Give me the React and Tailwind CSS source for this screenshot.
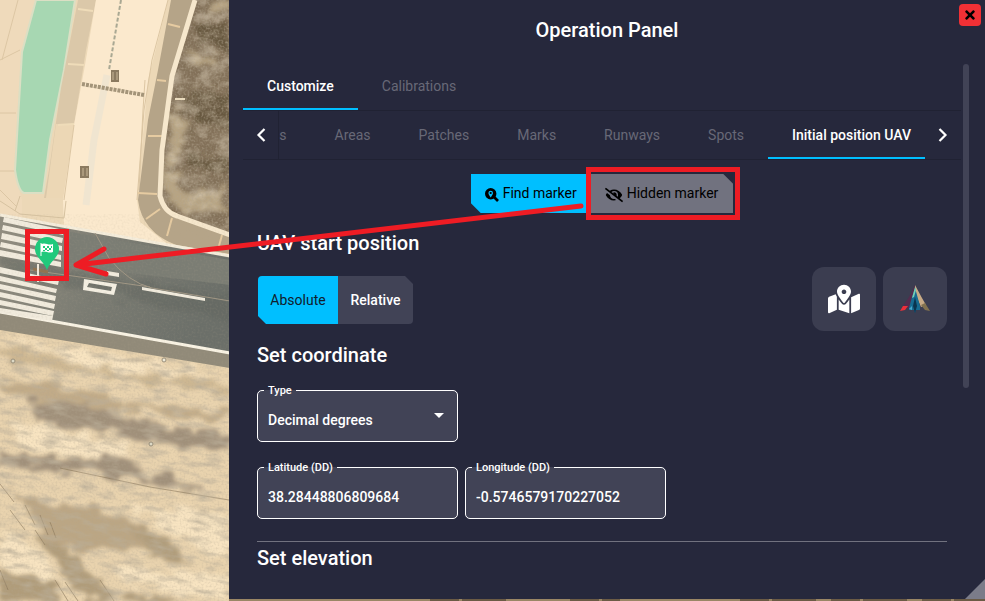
import { FaEyeSlash, FaMapMarkedAlt, FaTimes } from "react-icons/fa";

const HIDDEN_TABS = ["Areas", "Patches", "Marks", "Runways", "Spots"];

const STRIPES = [
  "4,217 64,230 63,235 3,222",
  "3,225 63,238 62,243 2,230",
  "2,233 62,246 62,251 1,239",
  "1,242 61,255 61,260 0,247",
  "0,250 61,262 61,267 0,256",
  "0,267 59,280 58,285 0,273",
  "0,276 57,289 56,293 0,281",
  "0,284 56,296 55,301 0,289",
  "0,292 55,304 54,309 0,297",
  "0,300 54,311 53,316 0,305",
  "0,308 53,316 52,321 0,313",
];

const Terrain = () => (
  <svg
    aria-hidden="true"
    className="absolute inset-0 h-full w-full"
    viewBox="0 0 985 601"
    preserveAspectRatio="xMinYMin slice"
  >
    <defs>
      <filter id="soft" x="-20%" y="-20%" width="140%" height="140%">
        <feTurbulence type="fractalNoise" baseFrequency="0.05 0.09" numOctaves="4" seed="4" result="n" />
        <feDisplacementMap in="SourceGraphic" in2="n" scale="24" xChannelSelector="R" yChannelSelector="G" />
        <feGaussianBlur stdDeviation="2" />
      </filter>
      <filter id="grain" x="0" y="0" width="100%" height="100%">
        <feTurbulence type="fractalNoise" baseFrequency="0.05 0.16" numOctaves="5" seed="8" />
        <feColorMatrix values="0 0 0 0 0.5  0 0 0 0 0.43  0 0 0 0 0.32  1.9 0 0 0 -0.85" />
      </filter>
      <filter id="dust" x="0" y="0" width="100%" height="100%">
        <feTurbulence type="fractalNoise" baseFrequency="0.5" numOctaves="2" seed="3" />
        <feColorMatrix values="0 0 0 0 0.45  0 0 0 0 0.38  0 0 0 0 0.28  1.4 0 0 0 -0.6" />
      </filter>
      <filter id="scrub" x="0" y="0" width="100%" height="100%">
        <feTurbulence type="fractalNoise" baseFrequency="0.06 0.08" numOctaves="5" seed="2" />
        <feColorMatrix values="0 0 0 0 0.72  0 0 0 0 0.63  0 0 0 0 0.49  1.9 0 0 0 -0.8" />
      </filter>
      <linearGradient id="asphalt" x1="0" y1="0" x2="1" y2="0.3">
        <stop offset="0" stopColor="#918d80" />
        <stop offset="0.5" stopColor="#7b7c73" />
        <stop offset="1" stopColor="#6b6f69" />
      </linearGradient>
      <clipPath id="field">
        <path d="M0 330 L230 368 V601 H0Z" />
      </clipPath>
      <clipPath id="bush">
        <path d="M195 0 H230 V235 L177 216 Q164 212 160 196 L162 150 L172 76Z" />
      </clipPath>
    </defs>

    <rect width="985" height="601" fill="#ecd8b7" />

    {/* apron and grass strip */}
    <path d="M0 0 H36 L21 53 L14 170 L22 200 V218 H0Z" fill="#efdabb" />
    <path d="M0 60 L20 50 M0 113 H16 M0 171 H15 M18 0 L2 60 M0 190 L16 206" stroke="#dcc6a4" fill="none" />
    <path d="M36 0 L22 52 L15 170 Q18 191 24 193 H43 L50 140 L64 70 L75 0Z" fill="#a7d7b2" stroke="#dbdfc4" strokeWidth="2" />
    <path d="M78 0 L61 88 L49 170 L44 198 H66 L74 125 L86 50 L96 0Z" fill="#dbc8a9" />
    <path d="M56 124 L74 125 L65 198 H46Z" fill="#ecd7b5" />
    <path d="M78 9 L93 11 M68 64 L84 65 M58 125 L74 124" stroke="#efdcb9" strokeWidth="2" />
    <path d="M96 0 H168 L148 80 L137 200 L140 222 L170 246 L64 226 L63 200 L74 125 L85 65Z" fill="#fbe9cd" />
    <path d="M168 0 L152 60 L144 110 L137 200 M145 80 L143 110 L139 190 M74 125 L64 200" stroke="#dcc6a3" fill="none" />
    <path d="M107 75 L94 140 L86 205" stroke="#f0e5d0" strokeWidth="7" fill="none" />
    <path d="M121 0 L109 70" stroke="#a9a893" strokeWidth="2" strokeDasharray="4 2" />
    <path d="M82 84 L144 95" stroke="#a39479" strokeWidth="4" strokeDasharray="3 1" />
    <path d="M111 70h8v12h-8z M80 166h9v12h-9z" fill="#8b7a60" />
    <path d="M113 72v8 M117 72v8 M83 168v8 M87 168v8" stroke="#c9b797" />
    <path d="M0 201 L20 214 L64 218 L66 201 M20 196 L15 211" stroke="#d6c2a0" fill="none" />

    {/* service road and scrub */}
    <path d="M171 0 H195 L172 76 L163 150 L160 200 Q166 218 230 235 V254 L176 245 Q142 232 138 200 L148 120 L158 70Z" fill="#b5a488" />
    <path d="M168 24 L180 27 M157 80 L166 81 M148 136 L163 136 M138 193 L157 194 M146 219 L160 209 M172 218 L167 236 M222 235 L219 246" stroke="#e6cba1" strokeWidth="2" />
    <g clipPath="url(#bush)">
      <rect x="155" width="75" height="236" fill="#837159" />
      <g filter="url(#soft)">
        <path d="M180 55 H215 V65 H190Z M175 190 H225 V212 H182Z M172 110 L190 120 L182 150 L165 170Z M205 0h25v12h-25z M165 170h15v30h-15z" fill="#b7a483" />
        <path d="M198 25h32v22h-32z M195 92h35v32h-35z M192 155h38v16h-38z M180 98h14v12h-14z" fill="#67583f" />
      </g>
      <rect x="155" width="75" height="236" filter="url(#scrub)" opacity="0.7" />
      <rect x="155" width="75" height="236" filter="url(#dust)" />
    </g>
    <path d="M195 0 L172 76 L162 150 L160 196 Q164 212 177 216 L230 235" fill="none" stroke="#f6e7cc" strokeWidth="5" />
    <path d="M175 99 H185" stroke="#eadbbd" strokeWidth="2" />

    {/* runway */}
    <path d="M0 214 L230 256 V370 L0 330Z" fill="url(#asphalt)" />
    <path d="M70 232 L230 260 V285 L120 272 L68 262Z" fill="#7b7d74" />
    <path d="M0 313 L230 353 V368 L0 331Z" fill="#918a79" />
    <path d="M0 256 L100 277 L230 294 V320 L70 288 L0 270Z" fill="#60655f" opacity="0.45" filter="url(#soft)" />
    <path d="M0 215 L230 256" stroke="#f5eddb" strokeWidth="3" />
    <path d="M0 312 L230 353" stroke="#f9f3e4" strokeWidth="3" />
    {STRIPES.map((points) => (
      <polygon key={points} points={points} fill="#f1ebdd" />
    ))}
    <path d="M84 279 L117 284 L114 295 L83 290Z M89 283 L87 287 L111 291 L112 287Z" fill="#f4efe2" fillRule="evenodd" />
    <path d="M107 271 L119 273 V277 L107 275Z M142 287 L205 298 V301 L142 290Z" fill="#f1ebdd" />
    <path d="M95 233 L109 258 Q128 282 152 288 L230 301 M30 270 L80 277 L150 287" fill="none" stroke="#a09684" />
    <path d="M33 269 L48 272" stroke="#8e7351" strokeWidth="3" />
    <path d="M38 264 V282" stroke="#f1eadb" strokeWidth="2" />
    <path d="M0 214 L230 256 V370 L0 330Z" filter="url(#dust)" opacity="0.25" />

    {/* ploughed field */}
    <g clipPath="url(#field)">
      <rect y="320" width="230" height="281" fill="#e9d3ae" />
      <g filter="url(#soft)">
        <path d="M0 345 L110 370 L230 385 V392 L120 380 L0 360Z" fill="#cdb792" />
        <path d="M0 380 L70 388 L130 404 L230 412 V420 L100 408 L0 394Z" fill="#c1ab88" />
        <path d="M28 400 L80 402 L135 420 L229 436 V454 L150 440 L100 431 L35 420Z" fill="#a0907a" />
        <path d="M0 452 L60 460 L110 455 L150 473 L205 485 L200 490 L150 482 L80 473 L0 465Z" fill="#a0907a" />
        <path d="M5 482 L25 500 L85 503 L130 520 L190 558 L170 563 L130 545 L85 552 L50 545 L30 515Z" fill="#bba684" />
        <path d="M35 530 L80 560 L115 601 H85Z M0 570 L50 580 L60 601 H0Z M130 594 L200 601 H120Z M135 525 L190 560 L150 556Z" fill="#b09c7a" />
        <path d="M15 423 L75 432 L130 446 L125 456 L70 455 L15 445Z M130 505 L229 515 V560 L195 550Z M0 525 L35 545 L60 585 L0 565Z M110 566 L229 575 V598 L130 585Z M0 335 L100 355 L229 375 L100 368Z" fill="#f8e4c1" />
      </g>
      <path d="M0 484 L14 502 M10 510 L25 530 M25 505 L35 525 M40 515 L48 535 M50 522 L56 538 M35 530 L45 545 M0 570 L8 590 M55 580 L68 601 M65 582 L78 601 M100 580 L114 601 M60 468 L150 487 L229 500" stroke="#88765a" opacity="0.6" fill="none" />
      <g transform="rotate(8 115 460)">
        <rect x="-50" y="300" width="330" height="330" filter="url(#grain)" />
      </g>
      <rect y="320" width="230" height="281" filter="url(#dust)" opacity="0.5" />
    </g>
    <circle cx="13" cy="361" r="2" fill="#dcd8c5" stroke="#9a8f7a" />
    <circle cx="164" cy="360" r="2" fill="#eeead9" stroke="#9a8f7a" />
    <circle cx="151" cy="444" r="2" fill="#dcd8c5" stroke="#9a8f7a" />

    <rect x="229" y="596" width="756" height="5" fill="#9a8665" />
    <path d="M430 600 H510 M570 600 H620 M740 600 H985" stroke="#6b5b45" strokeWidth="3" strokeDasharray="29 3 44 15" />

    {/* start marker */}
    <path d="M47 270 C43 260 35 257 35 249 A12 12 0 0 1 59 249 C59 257 51 260 47 270Z" fill="#21c97c" />
    <path d="M41 243 V256" stroke="#fff" />
    <path d="M41 244 Q44 243 47 244 T53 244 V252 Q50 253 47 252 T41 252Z" fill="#fff" />
    <path d="M43 246h2v2h-2z M47 246h2v2h-2z M51 246h1v2h-1z M45 248h2v2h-2z M49 248h2v2h-2z M43 250h2v1h-2z M47 250h2v1h-2z" fill="#21c97c" />
  </svg>
);

const Annotation = () => (
  <svg
    aria-hidden="true"
    className="pointer-events-none absolute inset-0 h-full w-full"
    viewBox="0 0 985 601"
    preserveAspectRatio="xMinYMin slice"
    fill="none"
    stroke="#ee1c24"
  >
    <rect x="27.500" y="231.500" width="39" height="47" strokeWidth="5" />
    <rect x="588.500" y="169.500" width="149" height="48" strokeWidth="5" />
    <path d="M581 206 L76 265 M104 249 L76 265 L106 274" strokeWidth="5" strokeLinecap="round" strokeLinejoin="round" />
  </svg>
);

const Chevron = ({ d }) => (
  <svg viewBox="0 0 10 14" className="h-[14px] w-[10px]" aria-hidden="true">
    <path d={d} fill="none" stroke="currentColor" strokeWidth="2.200" />
  </svg>
);

const FindIcon = () => (
  <svg viewBox="0 0 14 14" className="mt-1 size-[14px]" aria-hidden="true">
    <path d="M9 9 L13 13" stroke="currentColor" strokeWidth="2.600" />
    <circle cx="5.700" cy="5.700" r="5.700" fill="currentColor" />
    <path
      d="M5.700 9.400 C4.500 7.600 3.400 6.500 3.400 5 A2.300 2.300 0 0 1 8 5 C8 6.500 6.900 7.600 5.700 9.400Z"
      fill="#00bfff"
    />
    <circle cx="5.700" cy="5" r="1.100" fill="currentColor" />
  </svg>
);

const Tab = ({ active, children }) => (
  <button
    role="tab"
    aria-selected={active}
    className={
      active
        ? "h-12 shrink-0 border-b-2 border-[#00bfff] px-6 pt-[2px] text-sm font-medium text-white"
        : "h-12 shrink-0 px-6 text-sm text-[#686977]"
    }
  >
    {children}
  </button>
);

const Outlined = ({ id, label, children }) => (
  <fieldset className="h-[58px] w-[201px] min-w-0 rounded-[5px] border border-white bg-[#414356] px-[6px]">
    <legend className="h-[13px] px-1 text-[11px] leading-[13px] font-medium">
      <label htmlFor={id}>{label}</label>
    </legend>
    {children}
  </fieldset>
);

const Heading = ({ children }) => (
  <h2 className="text-xl leading-6 font-medium">{children}</h2>
);

const AircraftLogo = () => (
  <svg viewBox="0 0 30 28" className="h-7 w-[30px]" aria-hidden="true">
    <path d="M15 0 L9 12 L3 21 L10 25 L15 12Z" fill="#542c4e" />
    <path d="M3 21 L0 26 L5 25 L8 21Z" fill="#ee2f39" />
    <path d="M15 0 L22 13 L26 20 L21 22 L15 8Z" fill="#c8ab86" />
    <path d="M21 20 L25 18 L30 26 L25 25Z" fill="#82724f" />
    <path d="M15 3 L12 12 L9 23 L9 25 L14 25 L15 28 L16 25 L20 25 L20 21 L17 10Z" fill="#176a91" />
    <path d="M15 2 L12 13 L14 12 L16 5Z" fill="#75cfb5" />
    <path d="M15 12 L13 21 L15 28 L17 21Z" fill="#0b344f" />
    <path d="M9 24 L12 21 L12 25Z" fill="#48a7cc" />
  </svg>
);

const Panel = () => (
  <main className="relative mb-[2px] ml-[229px] flex flex-1 flex-col bg-[#26283c]">
    <h1 className="pt-[18px] text-center text-xl leading-6 font-medium">Operation Panel</h1>
    <button
      aria-label="Close"
      className="absolute top-1 right-1 flex size-[22px] items-center justify-center rounded bg-[#f03035] text-black"
    >
      <FaTimes className="size-[14px]" />
    </button>

    <div className="flex flex-1 gap-[2px] pt-5 pr-4 pl-[14px]">
      <div className="min-w-0 flex-1">
        <div role="tablist" className="flex border-b border-[#202233]">
          <Tab active>Customize</Tab>
          <Tab>Calibrations</Tab>
        </div>
        <div className="flex border-b border-[#202233]">
          <button aria-label="Previous tabs" className="flex w-9 shrink-0 items-center justify-center border-r border-[#202233]">
            <Chevron d="M8.500 1 L2.500 7 L8.500 13" />
          </button>
          <div role="tablist" className="flex min-w-0 flex-1 justify-end overflow-hidden">
            <button role="tab" aria-selected={false} className="h-12 shrink-0 pr-6 text-sm text-[#686977]">
              s
            </button>
            {HIDDEN_TABS.map((name) => (
              <Tab key={name}>{name}</Tab>
            ))}
            <button
              role="tab"
              aria-selected
              className="h-12 shrink-0 border-b-2 border-[#00bfff] pt-[2px] pr-[14px] pl-6 text-sm font-medium whitespace-nowrap"
            >
              Initial position UAV
            </button>
          </div>
          <button aria-label="Next tabs" className="flex w-9 shrink-0 items-center justify-center">
            <Chevron d="M1.500 1 L7.500 7 L1.500 13" />
          </button>
        </div>

        <div className="flex justify-center pt-[14px] text-sm text-black">
          <button className="flex h-[39px] items-center gap-1 bg-[#00bfff] pr-[10px] pb-[2px] pl-[14px] [clip-path:polygon(0_0,100%_0,100%_100%,10px_100%,0_29px)]">
            <FindIcon />
            Find marker
          </button>
          <button className="flex h-[39px] items-center gap-1 bg-[#71727f] pr-[15px] pb-[2px] pl-[18px] [clip-path:polygon(0_0,calc(100%_-_10px)_0,100%_10px,100%_100%,0_100%)]">
            <FaEyeSlash className="mt-1 size-[18px]" />
            Hidden marker
          </button>
        </div>

        <div className="px-[14px] pt-[18px]">
          <Heading>UAV start position</Heading>
          <div className="mt-3 flex items-center justify-between">
            <div className="mt-[2px] ml-px flex overflow-hidden rounded text-sm [clip-path:polygon(0_0,calc(100%_-_8px)_0,100%_8px,100%_100%,8px_100%,0_40px)]">
              <button className="h-12 w-20 bg-[#00bfff] text-[#10202c]">Absolute</button>
              <button className="h-12 w-[75px] bg-[#414356] font-medium">Relative</button>
            </div>
            <div className="flex gap-[7px]">
              <button aria-label="Pick on map" className="flex size-16 items-center justify-center rounded-xl bg-[#3b3d50]">
                <FaMapMarkedAlt className="size-8" />
              </button>
              <button aria-label="Use aircraft position" className="flex size-16 items-center justify-center rounded-xl bg-[#3b3d50]">
                <AircraftLogo />
              </button>
            </div>
          </div>

          <div className="pt-3">
            <Heading>Set coordinate</Heading>
          </div>
          <form className="mt-[17px] flex flex-col gap-[19px] text-sm font-medium">
            <Outlined id="type" label="Type">
              <div className="relative">
                <select id="type" className="h-11 w-full appearance-none px-1 pt-[2px] outline-none">
                  <option>Decimal degrees</option>
                </select>
                <svg viewBox="0 0 10 5" className="pointer-events-none absolute top-4 right-[7px] h-[5px] w-[10px]" aria-hidden="true">
                  <path d="M0 0H10L5 5Z" fill="#fff" />
                </svg>
              </div>
            </Outlined>
            <div className="flex gap-[7px]">
              <Outlined id="lat" label="Latitude (DD)">
                <input id="lat" defaultValue="38.28448806809684" className="h-11 w-full px-1 pt-[2px] outline-none" />
              </Outlined>
              <Outlined id="lng" label="Longitude (DD)">
                <input id="lng" defaultValue="-0.5746579170227052" className="h-11 w-full px-1 pt-[2px] outline-none" />
              </Outlined>
            </div>
          </form>
          <hr className="mt-[22px] mb-1 border-[#71727f]" />
          <Heading>Set elevation</Heading>
        </div>
      </div>
      <div className="mt-[2px] h-[324px] w-[6px] rounded-full bg-[#414356]" />
    </div>
    <div className="absolute right-0 bottom-0 size-5 bg-[#7b7c89] [clip-path:polygon(100%_0,100%_100%,0_100%)]" />
  </main>
);

const App = () => (
  <div className="relative flex min-h-screen overflow-hidden font-[Roboto,sans-serif] text-white">
    <Terrain />
    <Panel />
    <Annotation />
  </div>
);

export default App;
